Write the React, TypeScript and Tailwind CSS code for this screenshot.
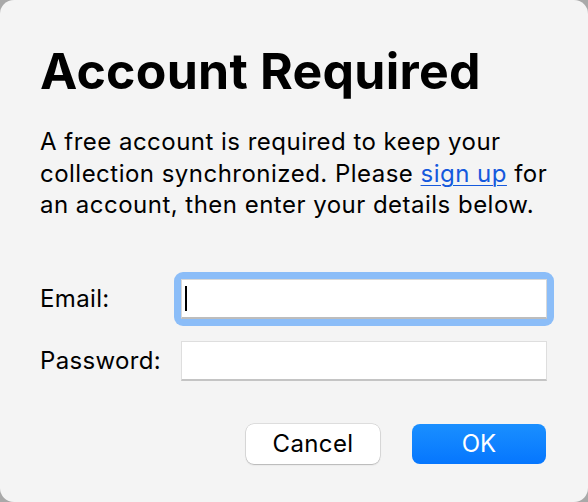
export default function App() {
  return (
    <div className="w-[588px] h-[502px] bg-[#a9a9a9]">
      <div
        className="w-full h-full rounded-[14px] bg-[#f4f4f4] flex flex-col text-black pl-10"
        style={{ fontFamily: "Inter, 'Liberation Sans', sans-serif" }}
      >
        <h1 className="mt-[46px] text-[50px] leading-[50px] font-bold tracking-[0.25px]">
          Account Required
        </h1>

        <p className="mt-[30px] text-[24px] leading-[31.5px] tracking-[0.48px]">
          A free account is required to keep your
          <br />
          collection synchronized. Please{" "}
          <a href="#" className="text-[#1559dd] underline underline-offset-[3px] decoration-1">
            sign up
          </a>{" "}
          for
          <br />
          an account, then enter your details below.
        </p>

        <div className="mt-[51px] flex flex-col gap-2 pr-[34px]">
          <div className="flex items-center">
            <label className="w-[134px] text-[24px] leading-none tracking-[0.35px]">Email:</label>
            <div className="flex-1 p-[7px] rounded-[9px] bg-[#8bbdf8]">
              <div className="h-10 bg-white border border-[#d8d8d8] border-b-[#bdbdbd] border-b-2 flex items-center pl-[3px]">
                <div className="w-[2px] h-[25px] bg-black" />
              </div>
            </div>
          </div>
          <div className="flex items-center">
            <label className="w-[134px] text-[24px] leading-none tracking-[0.35px]">Password:</label>
            <div className="flex-1 p-[7px]">
              <div className="h-10 bg-white border border-[#dedede] border-b-[#c4c4c4] border-b-2" />
            </div>
          </div>
        </div>

        <div className="mt-9 flex justify-end gap-8 pr-[42px]">
          <button className="w-[134px] h-10 rounded-[8px] bg-white text-[24px] tracking-[0.35px] shadow-[0_0_0_0.5px_rgba(0,0,0,0.18),0_1px_1.5px_rgba(0,0,0,0.18)]">
            Cancel
          </button>
          <button className="w-[134px] h-10 rounded-[8px] bg-gradient-to-b from-[#1a8fff] to-[#0676fe] text-white text-[24px]">
            OK
          </button>
        </div>
      </div>
    </div>
  );
}
